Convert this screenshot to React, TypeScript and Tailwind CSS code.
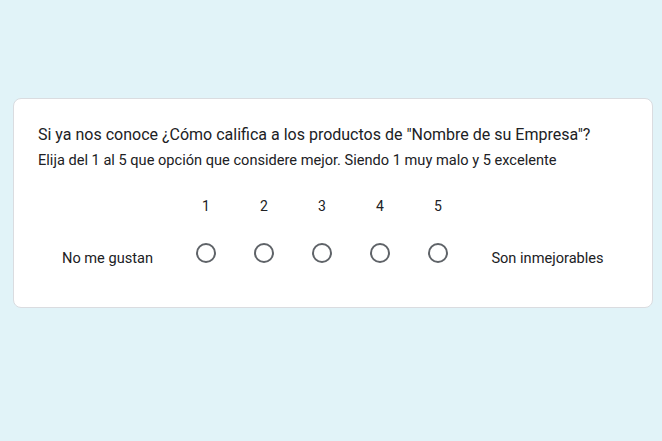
import React from 'react';

const options = [1, 2, 3, 4, 5];

const RadioCircle: React.FC = () => (
  <span className="block w-5 h-5 rounded-full border-2 border-[#5f6368]" />
);

const App: React.FC = () => {
  return (
    <div
      className="w-[662px] h-[441px] bg-[#e1f3f8] pt-[98px] pl-[13px]"
      style={{ fontFamily: 'Roboto, Arial, sans-serif' }}
    >
      <div className="w-[640px] h-[210px] bg-white rounded-lg border border-[#dadce0] pt-[24px] px-6 text-[#202124]">
        <h2 className="text-base leading-6">
          Si ya nos conoce ¿Cómo califica a los productos de "Nombre de su Empresa"?
        </h2>
        <p className="text-[14.6px] leading-5 mt-[3px]">
          Elija del 1 al 5 que opción que considere mejor. Siendo 1 muy malo y 5 excelente
        </p>

        <div className="mt-[26px] flex">
          <div className="w-[139px]" />
          {options.map((n) => (
            <div key={n} className="w-[58px] text-center text-[14px] leading-5">
              {n}
            </div>
          ))}
        </div>

        <div className="mt-[20px] flex items-center">
          <div className="w-[139px] text-center text-[14.6px] pt-3">No me gustan</div>
          {options.map((n) => (
            <div key={n} className="w-[58px] flex justify-center">
              <RadioCircle />
            </div>
          ))}
          <div className="flex-1 text-center text-[14.6px] pt-3">Son inmejorables</div>
        </div>
      </div>
    </div>
  );
};

export default App;
